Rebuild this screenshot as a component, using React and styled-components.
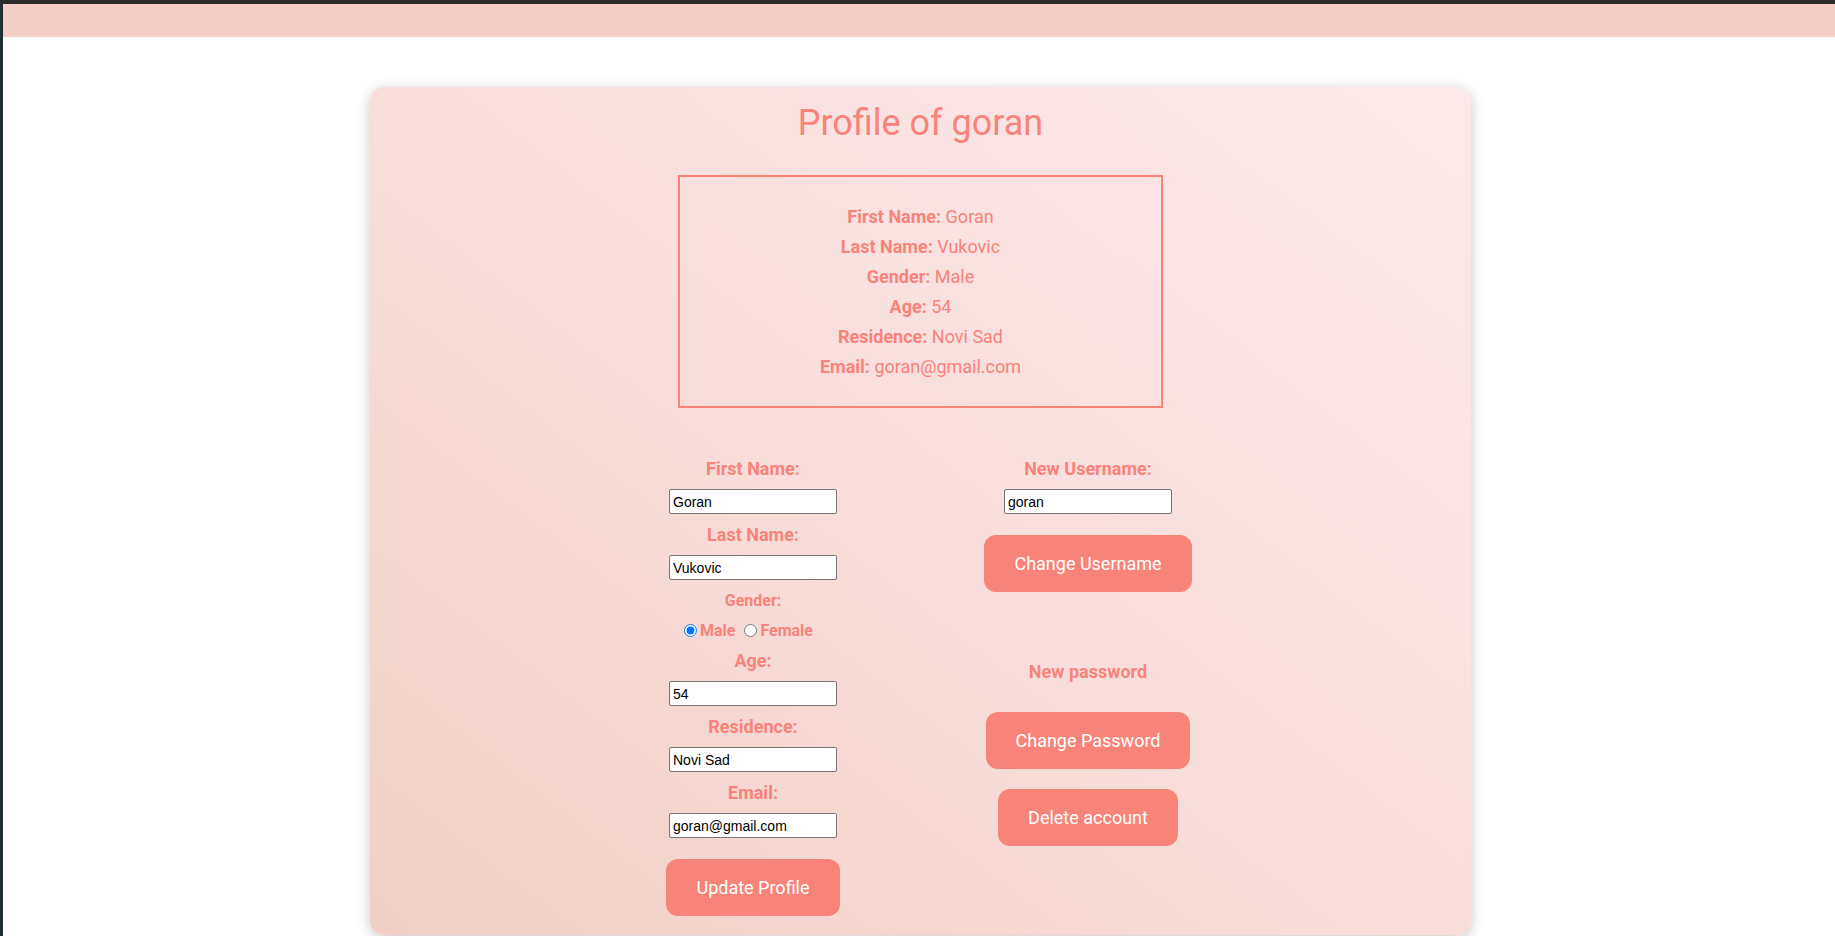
import React from 'react';
import styled, { createGlobalStyle } from 'styled-components';

const GlobalStyle = createGlobalStyle`
html, body {
  margin: 0;
  padding: 0;
  background: #fff;
  font-family: Roboto, "Liberation Sans", sans-serif;
}
`;

const salmon = '#f88379';

const Frame = styled.div`
  min-height: 100vh;
  box-sizing: border-box;
  border-top: 4px solid #2b2b2b;
  border-left: 3px solid #1f2f36;
  background: #fff;
`;

const NavBar = styled.nav`
  height: 33px;
  background: #f4cfc7;
`;

const Main = styled.main`
  display: flex;
  justify-content: center;
  padding: 50px 0 0 3px;
`;

const Card = styled.section`
  width: 1101px;
  box-sizing: border-box;
  padding: 15px 0 19px;
  border-radius: 14px;
  background: linear-gradient(to top right, #f2cfc6 0%, #f8dedb 50%, #fce9ea 100%);
  box-shadow: 0 3px 14px rgba(0, 0, 0, 0.22);
  color: ${salmon};
`;

const Title = styled.h1`
  margin: 0;
  font-size: 36px;
  line-height: 42px;
  font-weight: 400;
  text-align: center;
`;

const InfoBox = styled.div`
  width: 485px;
  box-sizing: border-box;
  margin: 31px auto 0;
  padding: 25px 0 24px;
  border: 2px solid ${salmon};
  text-align: center;
  font-size: 18px;
  line-height: 30px;

  p {
    margin: 0;
  }

  b {
    font-weight: 700;
  }
`;

const FormGrid = styled.div`
  display: grid;
  grid-template-columns: 335px 335px;
  justify-content: center;
  margin-top: 40px;
`;

const Column = styled.div`
  display: flex;
  flex-direction: column;
  align-items: center;
`;

const Label = styled.label`
  display: block;
  margin: ${p => (p.$small ? '11px 0 8px' : '10px 0')};
  margin-top: ${p => p.$top || undefined};
  margin-bottom: ${p => p.$bottom || undefined};
  font-size: ${p => (p.$small ? '16px' : '18px')};
  line-height: ${p => (p.$small ? '20px' : '21px')};
  font-weight: 700;
  color: ${salmon};
`;

const TextInput = styled.input`
  width: 168px;
  height: 25px;
  box-sizing: border-box;
  margin: 0;
  padding: 1px 3px;
  border: 1px solid #767676;
  border-radius: 2px;
  background: #fff;
  color: #000;
  font-family: Arial, "Liberation Sans", sans-serif;
  font-size: 14px;
`;

const RadioRow = styled.div`
  display: flex;
  align-items: center;
  height: 22px;
  padding-right: 14px;
  margin-bottom: -1px;
  font-size: 16px;
  font-weight: 700;
  white-space: pre;

  input {
    width: 13px;
    height: 13px;
    margin: 0 3px 0 5px;
    accent-color: #0075ff;
  }

  label {
    display: flex;
    align-items: center;
  }
`;

const Button = styled.button`
  margin-top: ${p => p.$top || '21px'};
  padding: 18px 30px;
  border: none;
  border-radius: 12px;
  background: ${salmon};
  color: #fff;
  font-family: Roboto, "Liberation Sans", sans-serif;
  font-size: 18px;
  line-height: 21px;
  cursor: pointer;
`;

const info = [
  ['First Name', 'Goran'],
  ['Last Name', 'Vukovic'],
  ['Gender', 'Male'],
  ['Age', '54'],
  ['Residence', 'Novi Sad'],
  ['Email', 'goran@gmail.com'],
];

const App = () => {
  return (
    <>
      <GlobalStyle />
      <Frame>
        <NavBar />
        <Main>
          <Card>
            <Title>Profile of goran</Title>
            <InfoBox>
              {info.map(([k, v]) => (
                <p key={k}>
                  <b>{k}:</b> {v}
                </p>
              ))}
            </InfoBox>
            <FormGrid>
              <Column>
                <Label>First Name:</Label>
                <TextInput defaultValue="Goran" />
                <Label>Last Name:</Label>
                <TextInput defaultValue="Vukovic" />
                <Label $small>Gender:</Label>
                <RadioRow>
                  <label>
                    <input type="radio" name="gender" defaultChecked />
                    {'Male '}
                  </label>
                  <label>
                    <input type="radio" name="gender" />
                    Female
                  </label>
                </RadioRow>
                <Label>Age:</Label>
                <TextInput defaultValue="54" />
                <Label>Residence:</Label>
                <TextInput defaultValue="Novi Sad" />
                <Label>Email:</Label>
                <TextInput defaultValue="goran@gmail.com" />
                <Button>Update Profile</Button>
              </Column>
              <Column>
                <Label>New Username:</Label>
                <TextInput defaultValue="goran" />
                <Button>Change Username</Button>
                <Label $top="69px" $bottom="30px">New password</Label>
                <Button $top="0">Change Password</Button>
                <Button $top="20px">Delete account</Button>
              </Column>
            </FormGrid>
          </Card>
        </Main>
      </Frame>
    </>
  );
};

export default App;
